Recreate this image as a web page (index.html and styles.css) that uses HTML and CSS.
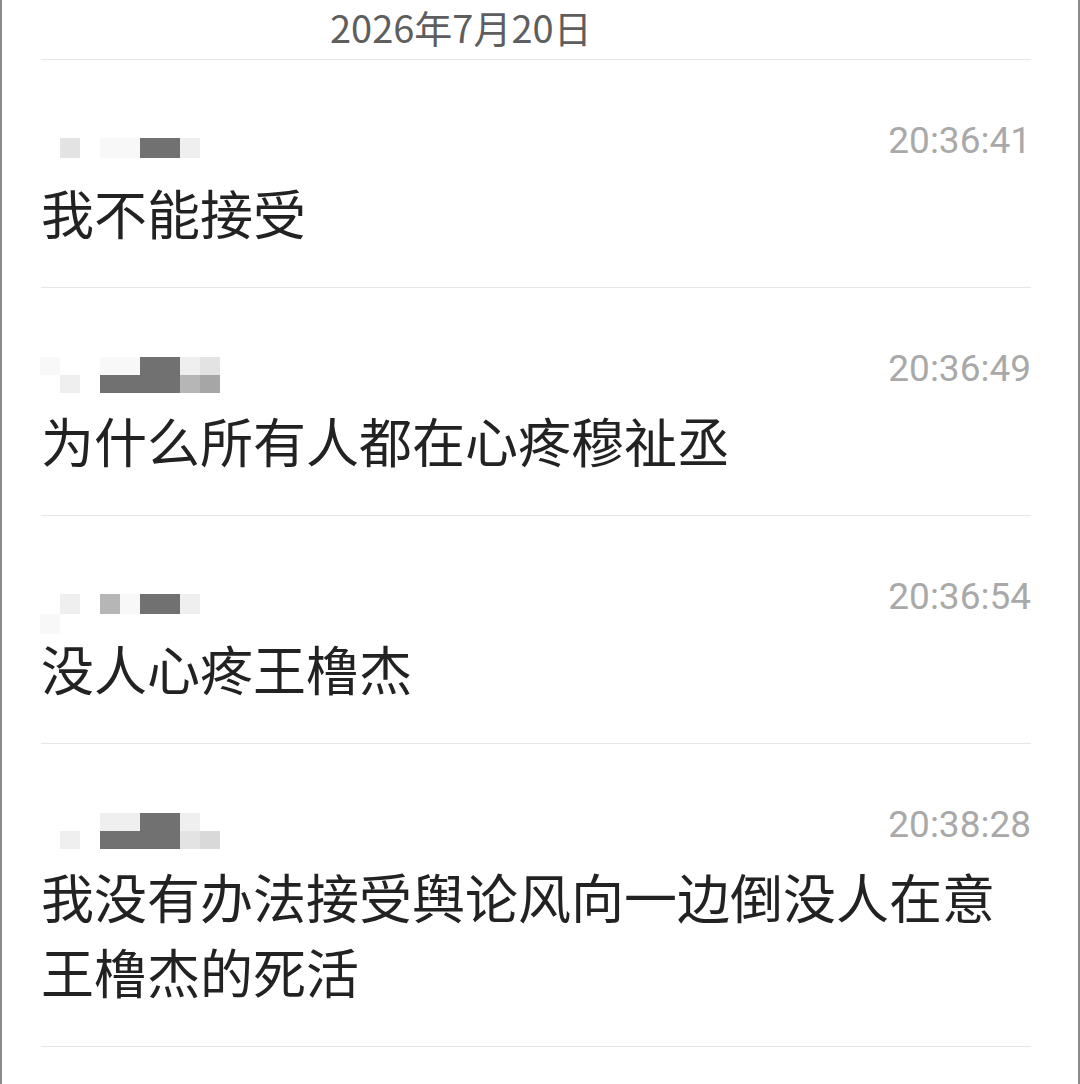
FILE: index.html
```html
<!DOCTYPE html>
<html lang="zh-CN">

<head>
    <meta charset="UTF-8">
    <meta name="viewport" content="width=device-width, initial-scale=1.0">
    <title>留言</title>

    <link rel="stylesheet" href="styles.css">
</head>

<body>

    <div class="page">
        <div class="list">
            <div class="date">2026年7月20日</div>

            <div class="item">
                <div class="item-head">
                    <div class="mosaic mosaic-low">
                        <span></span><span class="m3"></span><span></span><span class="m1"></span><span class="m1"></span><span class="m9"></span><span class="m9"></span><span class="m2"></span><span></span>
                        <span></span><span></span><span></span><span></span><span></span><span></span><span></span><span></span><span></span>
                    </div>
                    <div class="time">20:36:41</div>
                </div>
                <div class="message">我不能接受</div>
            </div>

            <div class="item">
                <div class="item-head">
                    <div class="mosaic">
                        <span class="m1"></span><span></span><span></span><span class="m1"></span><span class="m1"></span><span class="m9"></span><span class="m9"></span><span class="m2"></span><span class="m3"></span>
                        <span></span><span class="m2"></span><span></span><span class="m9"></span><span class="m9"></span><span class="m9"></span><span class="m9"></span><span class="m5"></span><span class="m6"></span>
                    </div>
                    <div class="time">20:36:49</div>
                </div>
                <div class="message">为什么所有人都在心疼穆祉丞</div>
            </div>

            <div class="item">
                <div class="item-head">
                    <div class="mosaic mosaic-low">
                        <span></span><span class="m2"></span><span></span><span class="m5"></span><span class="m1"></span><span class="m9"></span><span class="m9"></span><span class="m2"></span><span></span>
                        <span class="m1"></span><span></span><span></span><span></span><span></span><span></span><span></span><span></span><span></span>
                    </div>
                    <div class="time">20:36:54</div>
                </div>
                <div class="message">没人心疼王橹杰</div>
            </div>

            <div class="item">
                <div class="item-head">
                    <div class="mosaic">
                        <span></span><span></span><span></span><span class="m2"></span><span class="m2"></span><span class="m9"></span><span class="m9"></span><span class="m2"></span><span></span>
                        <span></span><span class="m2"></span><span></span><span class="m9"></span><span class="m9"></span><span class="m9"></span><span class="m9"></span><span class="m3"></span><span class="m4"></span>
                    </div>
                    <div class="time">20:38:28</div>
                </div>
                <div class="message">我没有办法接受舆论风向一边倒没人在意王橹杰的死活</div>
            </div>

            <div class="item item-last"></div>
        </div>
    </div>

</body>

</html>
```

FILE: styles.css
```css
body {
    margin: 0;
    padding: 0;
    background-color: #fff;
    font-family: "Noto Sans CJK SC", "Noto Sans", sans-serif;
}

.page {
    height: 1084px;
    overflow: hidden;
    border-left: 2px solid #8a8a8a;
    border-right: 2px solid #8a8a8a;
    box-sizing: border-box;
}

.list {
    margin: 0 47px 0 39px;
}

.date {
    height: 59px;
    line-height: 54px;
    padding-left: 289px;
    font-size: 38px;
    color: #5e5e5e;
    box-sizing: border-box;
}

.item {
    border-top: 1px solid #e6e6e6;
    padding: 59px 0 37px;
}

.item-last {
    padding: 0;
}

.item-head {
    display: flex;
    justify-content: space-between;
    align-items: flex-start;
    height: 44px;
}

/* blurred user name */
.mosaic {
    display: grid;
    grid-template-columns: repeat(9, 20px);
    grid-auto-rows: 18px;
    margin-top: 10px;
    margin-left: -1px;
}

.mosaic-low {
    grid-auto-rows: 20px;
    margin-top: 19px;
}

.m1 { background-color: #f8f8f8; }
.m2 { background-color: #efefef; }
.m3 { background-color: #e3e3e3; }
.m4 { background-color: #d9d9d9; }
.m5 { background-color: #b6b6b6; }
.m6 { background-color: #a6a6a6; }
.m9 { background-color: #717171; }

.time {
    font-family: Roboto, "Liberation Sans", sans-serif;
    font-size: 37px;
    line-height: 44px;
    color: #a9a9a9;
}

.message {
    margin-top: 12px;
    max-width: 970px;
    font-size: 53px;
    line-height: 75px;
    color: #222;
}
```
